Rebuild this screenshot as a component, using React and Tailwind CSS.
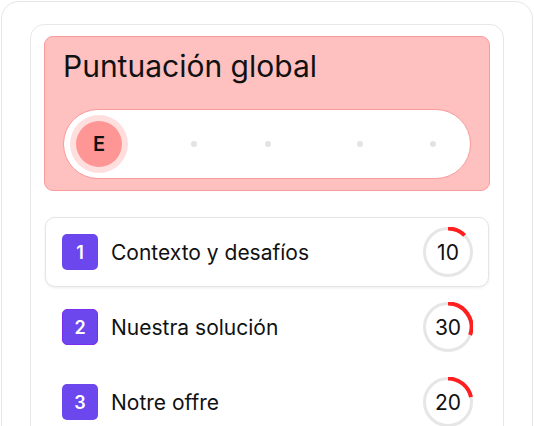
import React from "react";

function Ring({ value, angle }) {
  const r = 23.5;
  const cx = 25;
  const cy = 25;
  const a = (angle * Math.PI) / 180;
  const x = cx + r * Math.sin(a);
  const y = cy - r * Math.cos(a);
  const large = angle > 180 ? 1 : 0;
  return (
    <div className="relative w-[50px] h-[50px] flex items-center justify-center">
      <svg width="50" height="50" viewBox="0 0 50 50" className="absolute inset-0">
        <circle cx={cx} cy={cy} r={r} fill="none" stroke="#e6e6e6" strokeWidth="3" />
        <path
          d={`M ${cx} ${cy - r} A ${r} ${r} 0 ${large} 1 ${x} ${y}`}
          fill="none"
          stroke="#ff1f1f"
          strokeWidth="4"
        />
      </svg>
      <span className="relative text-[21px] leading-none text-[#111]">{value}</span>
    </div>
  );
}

function Row({ n, label, value, angle, active, bordered }) {
  return (
    <div
      className={
        "h-[70px] flex items-center pl-[16px] pr-[15px] rounded-[10px] border " +
        (active
          ? "border-[#e5e5e5] bg-white shadow-[0_1px_3px_rgba(0,0,0,0.08)]"
          : "border-transparent")
      }
    >
      <div
        className={
          "w-[36px] h-[36px] rounded-[5px] bg-[#6c47ee] flex items-center justify-center text-white text-[18px] font-semibold " +
          (bordered ? "border border-[#7a2ff0]" : "")
        }
      >
        {n}
      </div>
      <div className="ml-[13px] flex-1 text-[21px] text-[#111] leading-none">{label}</div>
      <Ring value={value} angle={angle} />
    </div>
  );
}

export default function App() {
  return (
    <div className="w-[534px] h-[426px] overflow-hidden bg-white pl-[1px] pt-[1px]" style={{ fontFamily: "Inter, 'Noto Sans', sans-serif" }}>
      <div className="w-[532px] h-[460px] rounded-[18px] border border-[#e6e6e6] px-[28px] pt-[22px]">
        <div className="h-[440px] rounded-[14px] border border-[#e8e8e8] px-[13px] pt-[11px]">
          <div className="rounded-[9px] border border-[#fa9a9a] bg-[#ffc0c0] pt-[12px] pb-[11px] px-[18px]">
            <div className="text-[30px] leading-[35px] text-[#111]">Puntuación global</div>
            <div className="mt-[25px] h-[70px] rounded-full border border-[#fa9a9a] bg-white flex items-center pl-[6px]">
              <div className="w-[58px] h-[58px] rounded-full bg-[#ffdede] flex items-center justify-center">
                <div className="w-[46px] h-[46px] rounded-full bg-[#ff9696] flex items-center justify-center text-[20px] font-semibold text-[#111]">
                  E
                </div>
              </div>
              <div className="ml-[63px] w-[6px] h-[6px] rounded-full bg-[#e3e3e3]" />
              <div className="ml-[68px] w-[6px] h-[6px] rounded-full bg-[#e3e3e3]" />
              <div className="ml-[86px] w-[6px] h-[6px] rounded-full bg-[#e3e3e3]" />
              <div className="ml-[67px] w-[6px] h-[6px] rounded-full bg-[#e3e3e3]" />
            </div>
          </div>
          <div className="mt-[26px] px-[1px] flex flex-col gap-[5px]">
            <Row n="1" label="Contexto y desafíos" value="10" angle={45} active />
            <Row n="2" label="Nuestra solución" value="30" angle={110} bordered />
            <Row n="3" label="Notre offre" value="20" angle={78} />
          </div>
        </div>
      </div>
    </div>
  );
}
